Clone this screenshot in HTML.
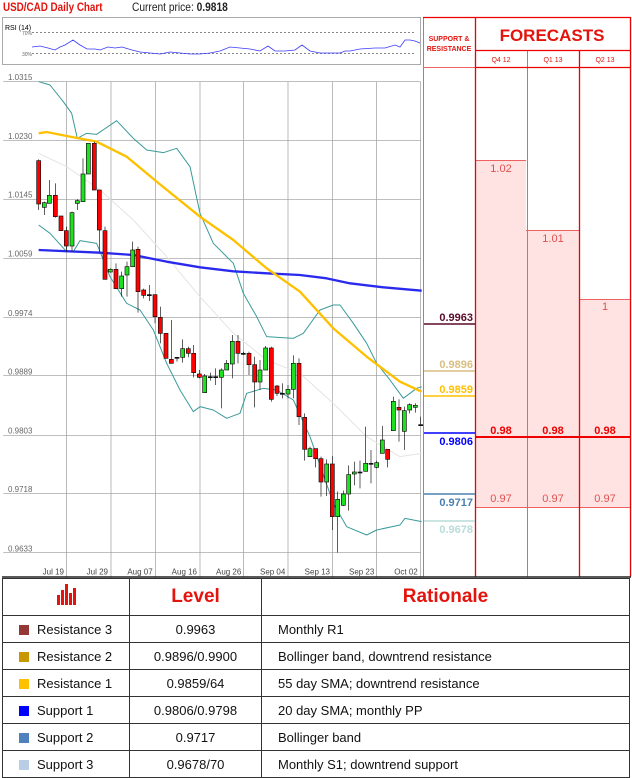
<!DOCTYPE html>
<html><head><meta charset="utf-8"><style>
body{margin:0;width:632px;height:775px;background:#fff;font-family:"Liberation Sans",sans-serif;position:relative;overflow:hidden}
.a{position:absolute}
table{position:absolute;left:2px;top:578px;border-collapse:collapse;width:628px;font-size:13px;color:#111}
td{border:1.3px solid #333;height:26px;padding:0}
.h td{height:36px;color:#e3140d;font-weight:bold;font-size:19px;text-align:center}
.c{text-align:center}
.sq{display:inline-block;width:10px;height:10px;margin:0 8px 0 16px;vertical-align:-1px}
</style></head><body>
<div class="a" style="left:3px;top:0;font-size:12px;font-weight:bold;color:#e3140d;transform:scaleX(0.82);transform-origin:0 0;white-space:nowrap">USD/CAD Daily Chart</div>
<div class="a" style="left:132px;top:0;font-size:12px;color:#222;transform:scaleX(0.85);transform-origin:0 0;white-space:nowrap">Current price: <b>0.9818</b></div>
<svg class="a" style="left:0;top:0" width="632" height="775">
<rect x="2.5" y="17.5" width="418" height="47" fill="#fff" stroke="#aaa"/>
<text x="5" y="30" font-size="7" font-family="Liberation Sans">RSI (14)</text>
<text x="22" y="35" font-size="5" fill="#666">70%</text><text x="22" y="56" font-size="5" fill="#666">30%</text>
<line x1="32" y1="32.5" x2="415" y2="32.5" stroke="#888" stroke-dasharray="2,2"/>
<line x1="32" y1="53.5" x2="415" y2="53.5" stroke="#888" stroke-dasharray="2,2"/>
<polyline fill="none" stroke="#3a3aff" stroke-width="0.8" points="32,47 40,46 48,48 55,50 60,47 65,45 73,40 80,45 87,49 95,49 100,50 108,47 115,48 122,47 132,50 140,52 150,53 160,54 165,53 170,52 180,53 190,54 200,54 210,53 220,51 230,47 240,48 250,49 260,51 268,46 275,51 285,51 295,50 302,45 310,51 320,53 330,53 340,53 345,51 350,51 360,49 375,48 385,48 395,45 400,47 405,40 410,40 415,41 420,43"/>
<!-- right panel -->
<rect x="421" y="160" width="209" height="347" fill="#ffe3e3"/>
<rect x="421" y="17" width="105" height="143" fill="#fff"/>
<rect x="526" y="17" width="104" height="213" fill="#fff"/>
<rect x="579" y="230" width="51" height="69" fill="#fff"/>
<rect x="421" y="17" width="54" height="560" fill="#fff"/>
<g stroke="#f06060" stroke-width="1"><line x1="475" y1="160.5" x2="526" y2="160.5"/><line x1="526" y1="230.5" x2="579" y2="230.5"/><line x1="579" y1="299.5" x2="630" y2="299.5"/><line x1="475" y1="507.5" x2="630" y2="507.5"/>
<line x1="527.5" y1="50" x2="527.5" y2="577"/><line x1="423.5" y1="17" x2="423.5" y2="577"/><line x1="423" y1="67.5" x2="475" y2="67.5"/></g>
<g stroke="#e00" stroke-width="1.3"><line x1="475.5" y1="17" x2="475.5" y2="577"/><line x1="579.5" y1="50" x2="579.5" y2="577"/><line x1="630.5" y1="17" x2="630.5" y2="577"/><line x1="423" y1="17.5" x2="631" y2="17.5"/><line x1="475" y1="50.5" x2="631" y2="50.5"/><line x1="475" y1="67.5" x2="631" y2="67.5"/></g>
<line x1="475" y1="437" x2="630" y2="437" stroke="#e00" stroke-width="2"/>
<g font-family="Liberation Sans" text-anchor="middle">
<text x="449" y="41" font-size="7" font-weight="bold" fill="#e3140d">SUPPORT &amp;</text>
<text x="449" y="51" font-size="7" font-weight="bold" fill="#e3140d">RESISTANCE</text>
<text x="552" y="41" font-size="17" font-weight="bold" fill="#e3140d">FORECASTS</text>
<text x="501" y="62" font-size="7" fill="#e3140d">Q4 12</text><text x="553" y="62" font-size="7" fill="#e3140d">Q1 13</text><text x="605" y="62" font-size="7" fill="#e3140d">Q2 13</text>
<text x="501" y="172" font-size="11" fill="#e05050">1.02</text><text x="553" y="242" font-size="11" fill="#e05050">1.01</text><text x="605" y="310" font-size="11" fill="#e05050">1</text>
<g font-size="11" font-weight="bold" fill="#e00"><text x="501" y="434">0.98</text><text x="553" y="434">0.98</text><text x="605" y="434">0.98</text></g>
<g font-size="11" fill="#e05050"><text x="501" y="502">0.97</text><text x="553" y="502">0.97</text><text x="605" y="502">0.97</text></g>
</g>
<g font-family="Liberation Sans" font-size="11" font-weight="bold" text-anchor="end">
<line x1="424" y1="324" x2="475" y2="324" stroke="#5a0a2a" stroke-width="1.5"/><text x="473" y="321" fill="#5a0a2a">0.9963</text>
<line x1="424" y1="371" x2="475" y2="371" stroke="#d8be80" stroke-width="1.5"/><text x="473" y="368" fill="#d8be80">0.9896</text>
<line x1="424" y1="396" x2="475" y2="396" stroke="#ffc000" stroke-width="1.5"/><text x="473" y="393" fill="#ffc000">0.9859</text>
<line x1="424" y1="433" x2="475" y2="433" stroke="#00f" stroke-width="1.5"/><text x="473" y="445" fill="#00f">0.9806</text>
<line x1="424" y1="494" x2="475" y2="494" stroke="#4a80b0" stroke-width="1.5"/><text x="473" y="506" fill="#4a80b0">0.9717</text>
<line x1="424" y1="521" x2="475" y2="521" stroke="#b8dcd8" stroke-width="1.5"/><text x="473" y="533" fill="#b8dcd8">0.9678</text>
</g>
<!-- chart -->
<g transform="translate(0,70) scale(0.33333)">
<g stroke="#999" stroke-width="2" fill="none">
<path d="M10,35H1262M10,212H1262M10,388H1262M10,566H1262M10,742H1262M10,916H1262M10,1096H1262M10,1270H1262M10,1447H1262"/>
<path d="M200,35V1525M333,35V1525M466,35V1525M600,35V1525M731,35V1525M864,35V1525M997,35V1525M1130,35V1525M1262,35V1525"/>
</g>
<g font-size="24" fill="#666" font-family="Liberation Sans"><text x="24" y="30">1.0315</text><text x="24" y="207">1.0230</text><text x="24" y="383">1.0145</text><text x="24" y="559">1.0059</text><text x="24" y="738">0.9974</text><text x="24" y="914">0.9889</text><text x="24" y="1090">0.9803</text><text x="24" y="1266">0.9718</text><text x="24" y="1444">0.9633</text></g>
<g font-size="24" fill="#444" font-family="Liberation Sans" text-anchor="middle"><text x="160" y="1513">Jul 19</text><text x="292" y="1513">Jul 29</text><text x="420" y="1513">Aug 07</text><text x="553" y="1513">Aug 16</text><text x="686" y="1513">Aug 26</text><text x="818" y="1513">Sep 04</text><text x="952" y="1513">Sep 13</text><text x="1085" y="1513">Sep 23</text><text x="1218" y="1513">Oct 02</text></g>
<g fill="none" stroke-linejoin="round">
<polyline stroke="#e4e4e4" stroke-width="3" points="116,250 200,290 300,360 400,450 500,560 600,680 700,790 800,870 900,910 1000,1000 1100,1100 1200,1160 1265,1150"/>
<polyline stroke="#3a9a9a" stroke-width="3" points="116,35 150,45 190,95 215,130 232,205 260,190 290,193 350,152 400,205 440,240 490,248 530,235 570,290 600,430 640,520 700,580 730,670 770,740 800,800 880,805 910,790 960,720 1000,705 1020,705 1060,760 1100,820 1130,880 1170,930 1210,985 1250,955 1265,950"/>
<polyline stroke="#3a9a9a" stroke-width="3" points="116,465 150,490 200,545 220,545 240,512 290,520 330,620 380,700 420,720 460,780 500,880 540,960 580,1025 600,1010 640,1020 680,1045 720,1030 740,970 790,955 830,960 880,990 930,1100 1000,1300 1040,1370 1100,1395 1130,1380 1200,1365 1215,1345 1265,1355"/>
<polyline stroke="#2a2aee" stroke-width="7" points="116,540 300,548 400,555 500,575 600,592 700,604 800,610 900,615 980,625 1050,640 1150,652 1265,662"/>
<polyline stroke="#ffc000" stroke-width="7" points="116,190 140,186 200,198 290,215 380,260 470,335 600,440 700,510 800,595 900,665 1000,775 1100,860 1200,935 1265,965"/>
</g>
<g id="c" stroke="#111" stroke-width="2"></g>
</g>
<line x1="2" y1="577" x2="631" y2="577" stroke="#222" stroke-width="1.5"/>
</svg>
<table>
<tr class="h"><td style="width:126px"><svg width="20" height="22" viewBox="0 0 20 22"><g fill="#e3140d"><rect x="1" y="12" width="3" height="10"/><rect x="5" y="7" width="3" height="15"/><rect x="9" y="1" width="3" height="21"/><rect x="13" y="10" width="3" height="12"/><rect x="17" y="5" width="3" height="17"/></g></svg></td><td style="width:131px">Level</td><td>Rationale</td></tr>
<tr><td><span class="sq" style="background:#953735"></span>Resistance 3</td><td class="c">0.9963</td><td style="padding-left:16px">Monthly R1</td></tr>
<tr><td><span class="sq" style="background:#c89800"></span>Resistance 2</td><td class="c">0.9896/0.9900</td><td style="padding-left:16px">Bollinger band, downtrend resistance</td></tr>
<tr><td><span class="sq" style="background:#ffc000"></span>Resistance 1</td><td class="c">0.9859/64</td><td style="padding-left:16px">55 day SMA; downtrend resistance</td></tr>
<tr><td><span class="sq" style="background:#0000ff"></span>Support 1</td><td class="c">0.9806/0.9798</td><td style="padding-left:16px">20 day SMA; monthly PP</td></tr>
<tr><td><span class="sq" style="background:#4f81bd"></span>Support 2</td><td class="c">0.9717</td><td style="padding-left:16px">Bollinger band</td></tr>
<tr><td><span class="sq" style="background:#b9cde5"></span>Support 3</td><td class="c">0.9678/70</td><td style="padding-left:16px">Monthly S1; downtrend support</td></tr>
</table>
<script>
var d=[[116,'r',272,402,268,420],[133,'g',398,412,395,435],[148,'g',376,400,330,400],[166,'r',376,440,340,443],[183,'r',438,482,438,482],[199,'r',482,528,470,545],[216,'g',428,528,425,545],[232,'g',392,400,388,420],[249,'g',312,395,265,395],[265,'g',220,312,220,312],[283,'r',220,360,215,360],[298,'r',360,480,360,545],[315,'r',482,628,470,628],[331,'g',598,606,595,608],[348,'r',598,656,580,656],[365,'g',618,656,605,680],[381,'g',590,615,575,680],[398,'g',540,590,515,590],[414,'r',538,665,530,728],[431,'r',660,676,656,685],[448,'k',674,674,645,693],[465,'r',674,740,674,760],[481,'r',742,790,710,820],[498,'r',790,865,790,865],[514,'r',868,880,750,880],[531,'k',862,862,862,875],[548,'g',836,862,808,878],[565,'r',836,850,830,862],[581,'r',850,908,825,922],[598,'r',912,922,900,925],[614,'g',918,968,912,968],[631,'k',920,920,908,932],[647,'k',920,920,895,945],[664,'g',900,922,895,1015],[680,'g',880,900,870,900],[697,'g',814,882,795,925],[714,'r',814,850,795,880],[730,'k',850,850,845,855],[747,'r',850,884,845,915],[764,'r',884,936,860,1012],[780,'g',900,936,870,960],[797,'g',834,900,828,900],[814,'r',834,988,830,995],[831,'r',948,970,945,978],[847,'k',970,970,940,985],[864,'g',958,972,945,985],[880,'g',880,958,856,985],[897,'r',880,1040,865,1065],[914,'r',1042,1138,1030,1172],[930,'g',1136,1160,1130,1160],[947,'r',1136,1166,1136,1192],[963,'r',1166,1236,1160,1280],[980,'g',1182,1236,1168,1278],[997,'r',1182,1340,1158,1380],[1013,'g',1288,1340,1265,1448],[1030,'g',1272,1306,1262,1308],[1046,'g',1214,1272,1186,1322],[1063,'g',1206,1212,1175,1246],[1080,'k',1206,1206,1172,1255],[1097,'g',1180,1204,1070,1204],[1113,'k',1180,1180,1140,1240],[1130,'g',1178,1192,1172,1195],[1147,'g',1110,1150,1068,1150],[1163,'r',1138,1168,1138,1192],[1180,'g',994,1082,980,1082],[1197,'r',1012,1020,988,1115],[1213,'g',1022,1084,1010,1140],[1229,'g',1004,1020,1000,1030],[1246,'g',1006,1012,1000,1028],[1262,'k',1064,1064,1040,1068]];
var s='';d.forEach(function(c){s+='<line x1="'+c[0]+'" y1="'+c[4]+'" x2="'+c[0]+'" y2="'+c[5]+'"/>';var f=c[1]=='r'?'#f00':c[1]=='g'?'#1ee01e':'#111';s+='<rect x="'+(c[0]-6)+'" y="'+c[2]+'" width="12" height="'+Math.max(c[3]-c[2],3)+'" fill="'+f+'"/>';});
document.getElementById('c').innerHTML=s;
</script>
</body></html>
